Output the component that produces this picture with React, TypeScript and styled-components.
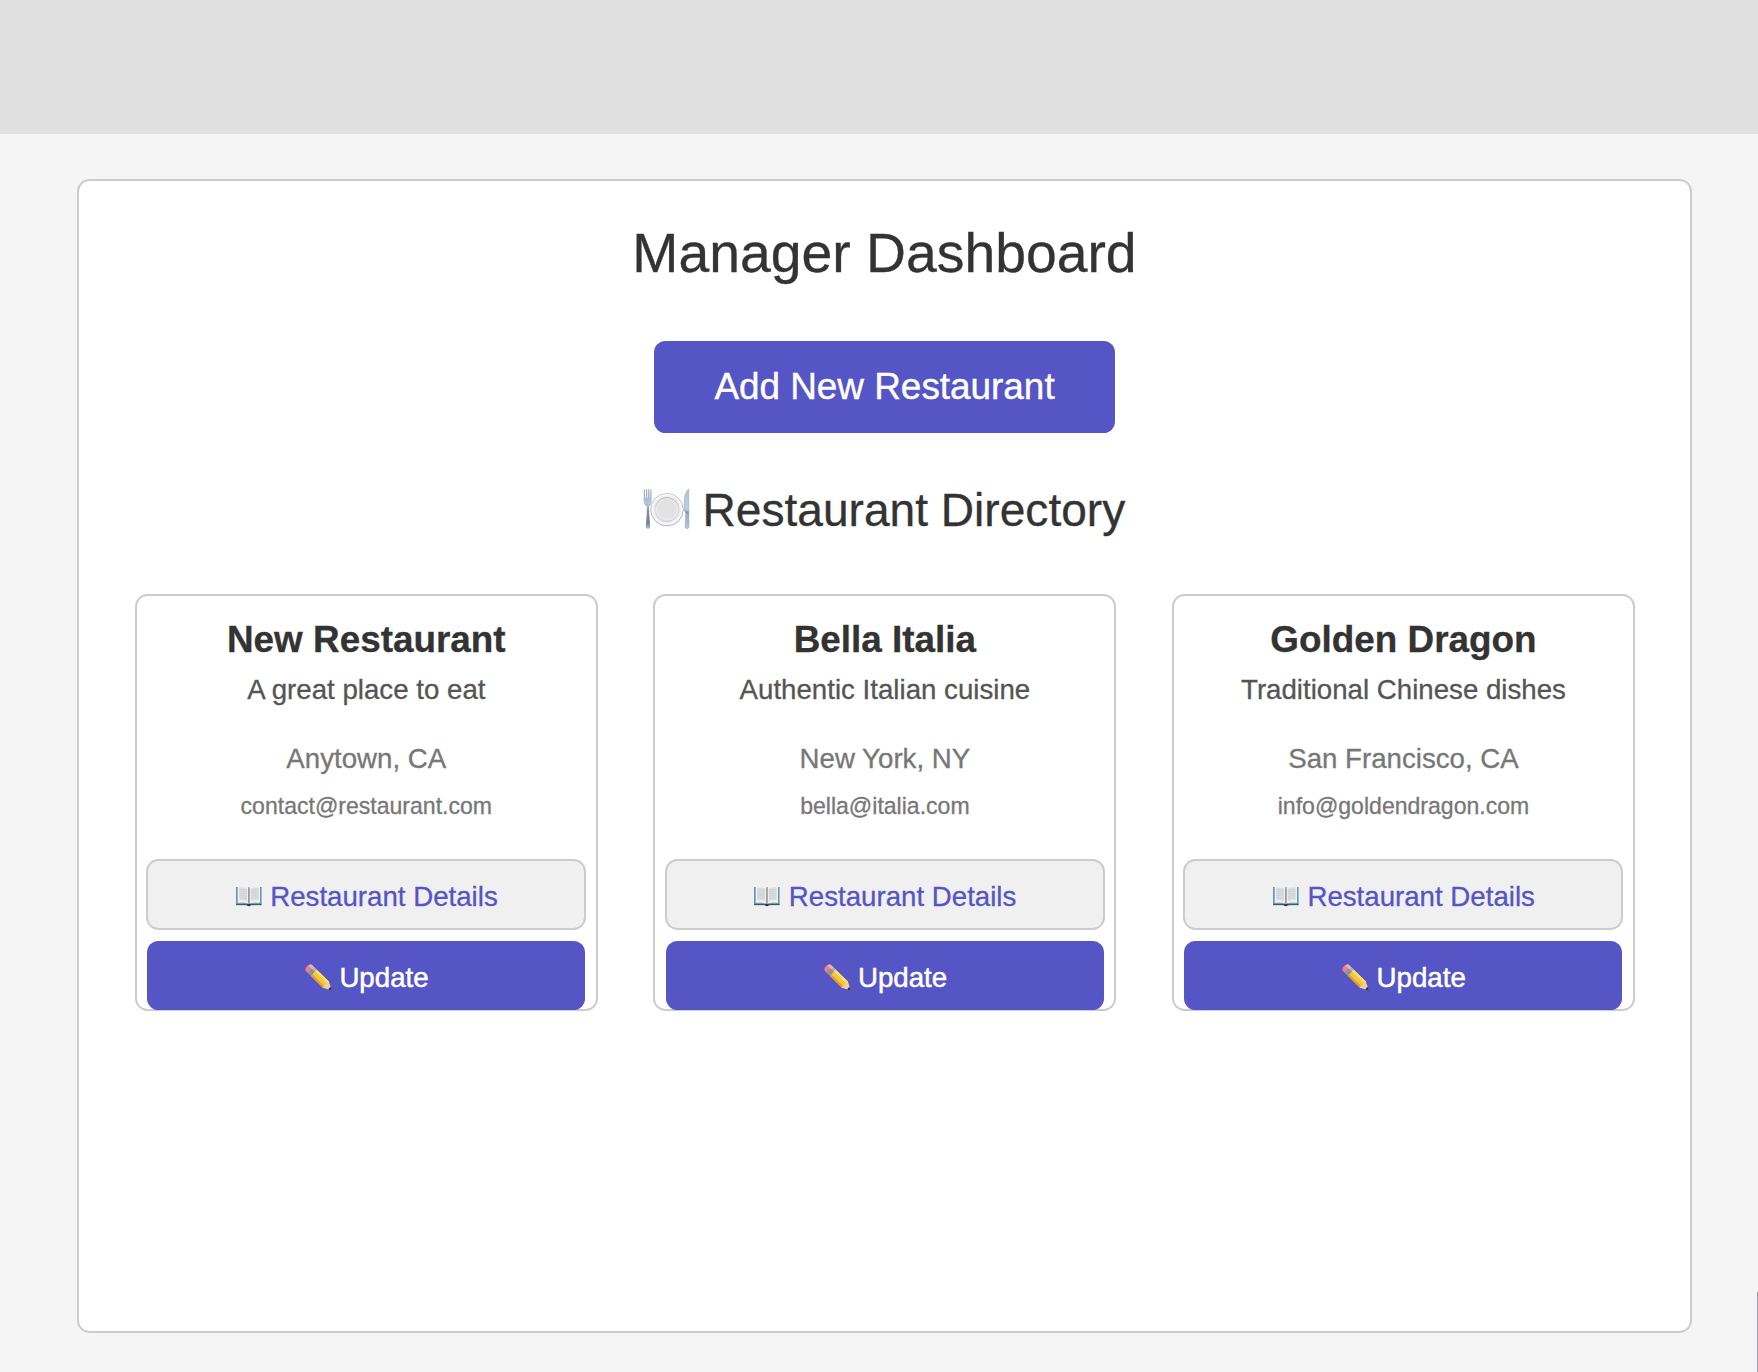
import React from 'react';
import styled, { createGlobalStyle } from 'styled-components';

const GlobalStyle = createGlobalStyle`
  * { box-sizing: border-box; }
  body {
    margin: 0;
    background: #f5f5f5;
    font-family: "Liberation Sans", Arial, Helvetica, sans-serif;
    -webkit-text-stroke: 0.3px currentColor;
    overflow: hidden;
  }
  h1, h2, h3, p { margin: 0; font-weight: 400; white-space: nowrap; }
`;

const Page = styled.div`
  height: 1372px;
  display: flex;
  flex-direction: column;
  align-items: center;
`;

const Header = styled.header`
  align-self: stretch;
  flex: none;
  height: 134px;
  background: #e0e0e0;
`;

const Panel = styled.main`
  width: 1615px;
  height: 1154px;
  margin: 45px 0 0 11px;
  border: 2px solid #ccc;
  border-radius: 12.5px;
  background: #fff;
  display: flex;
  flex-direction: column;
  align-items: center;
`;

const Title = styled.h1`
  margin-top: 40px;
  font-size: 55.32px;
  line-height: 64px;
  color: #333;
`;

const AddButton = styled.button`
  width: 461px;
  height: 92px;
  margin-top: 56px;
  padding: 0 0 2px;
  border: 0;
  border-radius: 11.5px;
  background: #5555c5;
  color: #fff;
  font: 36.88px/41px "Liberation Sans", Arial, sans-serif;
  -webkit-text-stroke: 0.4px currentColor;
`;

const Directory = styled.h2`
  display: flex;
  align-items: flex-start;
  gap: 12.8px;
  margin: 51px 1px 0 0;
  font-size: 46.1px;
  line-height: 52px;
  color: #333;
`;

const Cards = styled.section`
  display: flex;
  gap: 55.6px;
  margin: 58px 0 0 0.8px;
`;

const CardBox = styled.article`
  width: 463px;
  height: 417px;
  border: 2px solid #ccc;
  border-radius: 12.5px;
  display: flex;
  flex-direction: column;
  align-items: center;
`;

const Name = styled.h3`
  margin-top: 23px;
  font-size: 36.88px;
  font-weight: 700;
  line-height: 41px;
  color: #333;
`;

const Line = styled.p<{ $top: number; $size: number; $color: string }>`
  margin-top: ${(p) => p.$top}px;
  font-size: ${(p) => p.$size}px;
  line-height: 31px;
  color: ${(p) => p.$color};
`;

const CardButton = styled.button<{ $primary?: boolean }>`
  flex: none;
  display: flex;
  justify-content: center;
  align-items: flex-start;
  gap: 7.7px;
  width: ${(p) => (p.$primary ? 438 : 440)}px;
  height: ${(p) => (p.$primary ? 69 : 71)}px;
  margin-top: ${(p) => (p.$primary ? 11 : 37)}px;
  padding: ${(p) => (p.$primary ? '21px 0 0' : '20px 0 0')};
  border: ${(p) => (p.$primary ? '0' : '2px solid #ccc')};
  border-radius: ${(p) => (p.$primary ? 11.5 : 12.5)}px;
  background: ${(p) => (p.$primary ? '#5555c5' : '#f0f0f0')};
  color: ${(p) => (p.$primary ? '#fff' : '#5555c5')};
  font: 27.66px/31px "Liberation Sans", Arial, sans-serif;
  -webkit-text-stroke: ${(p) => (p.$primary ? 0.5 : 0.3)}px currentColor;
  white-space: nowrap;
`;

const Icon = styled.svg`
  display: block;
  flex: none;
`;

const ScrollThumb = styled.div`
  position: absolute;
  right: 0;
  top: 1292px;
  width: 1px;
  height: 80px;
  background: #9c9ca8;
`;

const PlateIcon = () => (
  <Icon width="47" height="52" viewBox="0 0 47 52">
    <defs>
      <linearGradient id="steel" x1="0" y1="0" x2="0" y2="1">
        <stop offset="0" stopColor="#9a9da2" />
        <stop offset=".36" stopColor="#b4c8e2" />
        <stop offset=".55" stopColor="#8b9098" />
        <stop offset=".85" stopColor="#7b7e84" />
        <stop offset="1" stopColor="#a9c2e2" />
      </linearGradient>
      <linearGradient id="blade" x1="0" y1="0" x2="0" y2="1">
        <stop offset="0" stopColor="#b5c0cc" />
        <stop offset=".5" stopColor="#b9d0e8" />
        <stop offset=".6" stopColor="#9da8b4" />
        <stop offset="1" stopColor="#b3c7df" />
      </linearGradient>
      <linearGradient id="rim" x1="0" y1="0" x2="0" y2="1">
        <stop offset="0" stopColor="#c0c0c4" />
        <stop offset="1" stopColor="#aaaaad" />
      </linearGradient>
      <linearGradient id="well" x1="0" y1="0" x2="0" y2="1">
        <stop offset="0" stopColor="#c2c2c2" />
        <stop offset=".5" stopColor="#dedede" />
        <stop offset="1" stopColor="#bfd3ee" />
      </linearGradient>
    </defs>
    <circle cx="24" cy="25.7" r="16.2" fill="#efefef" stroke="url(#rim)" strokeWidth=".9" />
    <circle cx="24" cy="25.5" r="15" fill="none" stroke="#fff" strokeWidth="1" />
    <circle cx="24" cy="25.5" r="11.8" fill="#eaeaea" stroke="url(#well)" strokeWidth="1.3" />
    <circle cx="24" cy="25.2" r="9.6" fill="#e2e2e2" />
    <path d="M.9 5.200h.9l.5 9h.6l.3-9h1l.2 9h.6l.3-9h1l.4 9h.5l.3-9h.9l.3 12.500c0 2-1.500 3.600-2.600 4.500l.2 8 .9 12.300c.2 3-4.600 3-4.400 0l.9-12.300.2-8C1.900 21.300.6 19.700.6 17.700z" fill="url(#steel)" />
    <path d="M45.900 5c-3 1.800-4.700 7-4.900 14v8l1.700 1-.7 14.800c-.2 2.500 4.200 2.500 4.100 0L45.900 27z" fill="url(#blade)" stroke="#98a4b2" strokeWidth=".4" />
    <path d="M42.700 27.500h2.800v1.500h-2.800z" fill="#868d95" />
  </Icon>
);

const BookIcon = () => (
  <Icon width="27.7" height="31" viewBox="0 0 27.7 31">
    <path d="M1 6h2v16.500h21.400V6h2.200v18.200c-4 0-8.500-.2-10.800.3-.6 1-3.200 1-3.800 0-2.500-.5-7-.3-11-.3z" fill="#5f9ab5" />
    <path d="M1.200 22.800c4.600.1 8.400-.3 11 .5h3.300c2.600-.8 6.500-.3 11-.5v1.200H1.200z" fill="#2c6078" />
    <path d="M2.700 5.200c4.600-1 9-.5 11.200 1.200v16.800c-2.500-1.300-7-1.700-11.200-1z" fill="#f1f1f1" />
    <path d="M25 5.200c-4.600-1-8.900-.5-11.100 1.200v16.800c2.500-1.300 6.900-1.700 11.100-1z" fill="#f1f1f1" />
    <path d="M4.200 6.800c2.700-.4 5.500-.2 7.800.6v12.700c-2.300-.8-5.100-1-7.800-.6zM15.800 7.400c2.300-.8 5.100-1 7.800-.6v12.700c-2.700-.4-5.500-.2-7.800.6z" fill="#dcdde0" />
    <path d="M4.200 8.600c2.700-.4 5.500-.2 7.800.6M4.200 10.700c2.700-.4 5.500-.2 7.800.6M4.200 12.800c2.700-.4 5.500-.2 7.800.6M4.200 14.900c2.700-.4 5.500-.2 7.800.6M4.200 17c2.700-.4 5.500-.2 7.800.6M15.800 9.200c2.300-.8 5.100-1 7.800-.6M15.800 11.300c2.300-.8 5.100-1 7.800-.6M15.800 13.400c2.300-.8 5.100-1 7.800-.6M15.800 15.500c2.300-.8 5.100-1 7.800-.6M15.800 17.600c2.300-.8 5.100-1 7.800-.6" fill="none" stroke="#cacbd0" strokeWidth=".7" />
    <path d="M13 6v16.600l.9.800.9-.8V6l-.9.600z" fill="#9c9ca0" />
    <path d="M3 22.300c4-.6 8.300-.2 10.900 1 2.600-1.200 6.900-1.600 11-1" fill="none" stroke="#77797b" strokeWidth=".6" />
    <path d="M12.200 23h3.400v1.500c-1 .7-2.500.7-3.400 0z" fill="#38382f" />
  </Icon>
);

const PencilIcon = () => (
  <Icon width="27.7" height="31" viewBox="0 0 27.7 31">
    <g transform="translate(2.900 4) rotate(44.500)">
      <path d="M3.100-4.300h2.500v8.600H3.100C-.9 4.300-.9-4.300 3.100-4.300z" fill="#ec8088" />
      <path d="M2.900-4.300h2.700v3H.8c.3-1.800 1-3 2.100-3z" fill="#f7acac" />
      <path d="M5.500-4.300h4.200v8.600H5.500z" fill="#8f9daa" />
      <path d="M5.500-4.300h4.200v2.800H5.500z" fill="#c0cad1" />
      <path d="M6.900-4.300v8.600M8.400-4.300v8.600" stroke="#6d7a86" strokeWidth=".5" />
      <path d="M9.700-4.300h17.300v8.600H9.700z" fill="#f5c63c" />
      <path d="M9.700-4.300h17.300v2.600H9.700z" fill="#ffdf68" />
      <path d="M9.700 2.200h17.300v2.100H9.700z" fill="#dda02a" />
      <path d="M26.700-4.300 35 0l-8.300 4.300c-.8-1-.8-2.100 0-2.900-.8-1-.8-1.900 0-2.800-.8-1-.8-1.900 0-2.900z" fill="#edd0a0" />
      <path d="m31.700-1.700 3.800 1.700-3.800 1.700c-.5-1.100-.5-2.300 0-3.400z" fill="#3b3733" />
    </g>
  </Icon>
);

const restaurants = [
  { name: 'New Restaurant', description: 'A great place to eat', location: 'Anytown, CA', email: 'contact@restaurant.com' },
  { name: 'Bella Italia', description: 'Authentic Italian cuisine', location: 'New York, NY', email: 'bella@italia.com' },
  { name: 'Golden Dragon', description: 'Traditional Chinese dishes', location: 'San Francisco, CA', email: 'info@goldendragon.com' },
];

export default function App() {
  return (
    <Page>
      <GlobalStyle />
      <Header />
      <Panel>
        <Title>Manager Dashboard</Title>
        <AddButton>Add New Restaurant</AddButton>
        <Directory>
          <PlateIcon />
          <span>Restaurant Directory</span>
        </Directory>
        <Cards>
          {restaurants.map((r) => (
            <CardBox key={r.name}>
              <Name>{r.name}</Name>
              <Line $top={14} $size={27.66} $color="#555">{r.description}</Line>
              <Line $top={38} $size={27.66} $color="#777">{r.location}</Line>
              <Line $top={17} $size={23.05} $color="#777">{r.email}</Line>
              <CardButton>
                <BookIcon />
                <span>Restaurant Details</span>
              </CardButton>
              <CardButton $primary>
                <PencilIcon />
                <span>Update</span>
              </CardButton>
            </CardBox>
          ))}
        </Cards>
      </Panel>
      <ScrollThumb />
    </Page>
  );
}
